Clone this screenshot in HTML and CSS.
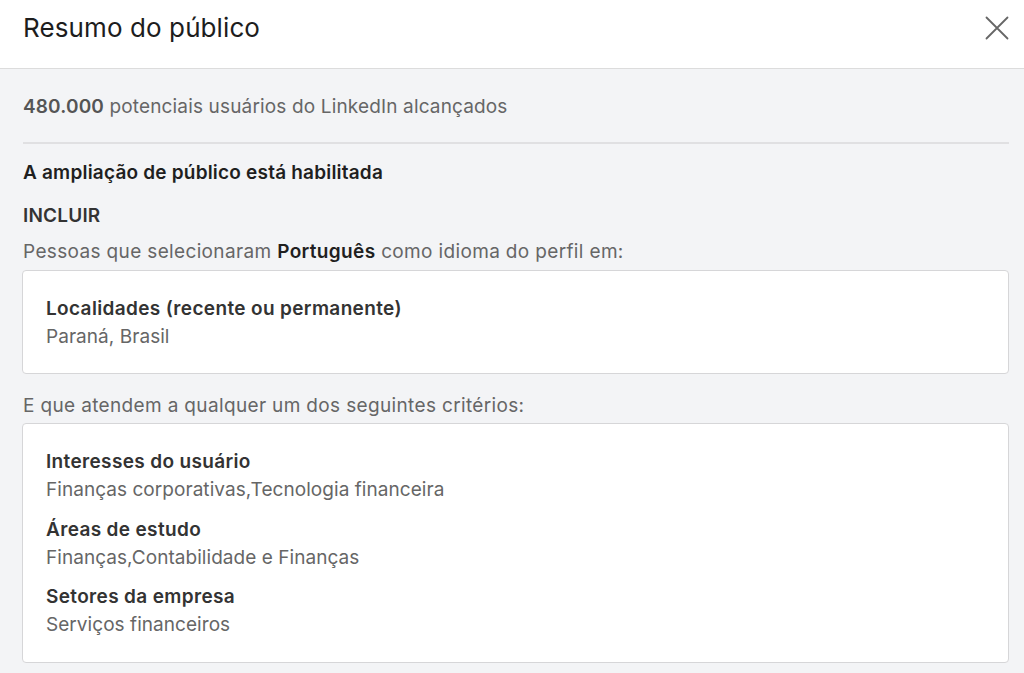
FILE: index.html
```html
<!DOCTYPE html>
<html lang="pt-BR">
<head>
<meta charset="utf-8">
<title>Resumo do público</title>
<link rel="stylesheet" href="styles.css">
</head>
<body>
<div class="modal">
  <header class="modal-header">
    <h1 class="modal-title">Resumo do público</h1>
    <button class="close-btn" aria-label="Fechar">
      <svg width="24" height="24" viewBox="0 0 24 24" fill="none" stroke="#666" stroke-width="1.8" stroke-linecap="round">
        <path d="M1.5 1.5 L22.5 22.5 M22.5 1.5 L1.5 22.5"/>
      </svg>
    </button>
  </header>
  <main class="modal-body">
    <p class="reach"><strong>480.000</strong> potenciais usuários do LinkedIn alcançados</p>
    <hr class="divider">
    <p class="expansion">A ampliação de público está habilitada</p>
    <p class="section-label">INCLUIR</p>
    <p class="desc">Pessoas que selecionaram <strong>Português</strong> como idioma do perfil em:</p>
    <div class="card card-single">
      <div class="criterion">
        <div class="crit-title">Localidades (recente ou permanente)</div>
        <div class="crit-value">Paraná, Brasil</div>
      </div>
    </div>
    <p class="desc desc-and">E que atendem a qualquer um dos seguintes critérios:</p>
    <div class="card card-multi">
      <div class="criterion">
        <div class="crit-title">Interesses do usuário</div>
        <div class="crit-value">Finanças corporativas,Tecnologia financeira</div>
      </div>
      <div class="criterion">
        <div class="crit-title">Áreas de estudo</div>
        <div class="crit-value">Finanças,Contabilidade e Finanças</div>
      </div>
      <div class="criterion">
        <div class="crit-title">Setores da empresa</div>
        <div class="crit-value">Serviços financeiros</div>
      </div>
    </div>
  </main>
</div>
</body>
</html>
```
FILE: styles.css
```css
* { box-sizing: border-box; }
html, body {
  margin: 0;
  padding: 0;
  height: 100%;
}
body {
  font-family: Inter, "Liberation Sans", Arial, sans-serif;
  background: #f3f4f6;
  color: #333;
  letter-spacing: 0.2px;
}
.modal {
  display: flex;
  flex-direction: column;
  min-height: 100%;
}
.modal-header {
  background: #fff;
  height: 69px;
  border-bottom: 1px solid #dcdcdc;
  display: flex;
  align-items: center;
  justify-content: space-between;
  padding: 0 14px 0 23px;
}
.modal-title {
  margin: 0;
  font-size: 26px;
  font-weight: 400;
  color: #1d1d1d;
  letter-spacing: 0.1px;
  padding-bottom: 13px;
}
.close-btn {
  background: none;
  border: 0;
  padding: 0;
  width: 24px;
  height: 24px;
  margin-bottom: 13px;
  margin-right: 1px;
  display: flex;
}
.modal-body {
  padding: 24px 15px 0 22px;
}
.reach {
  margin: 0 0 0 1px;
  font-size: 19px;
  line-height: 28px;
  color: #666;
  letter-spacing: 0.15px;
}
.reach strong { font-weight: 600; color: #555; }
.divider {
  border: 0;
  border-top: 2px solid #e0e0e2;
  margin: 21px 0 0 1px;
}
.expansion {
  margin: 15px 0 0 1px;
  font-size: 19px;
  font-weight: 600;
  line-height: 28px;
  color: #1f1f1f;
}
.section-label {
  margin: 15px 0 0 1px;
  font-size: 19px;
  font-weight: 600;
  line-height: 28px;
  color: #333;
}
.desc {
  margin: 8px 0 0 1px;
  font-size: 19px;
  line-height: 28px;
  color: #666;
  letter-spacing: 0.35px;
}
.desc strong { font-weight: 600; color: #1f1f1f; }
.desc-and { margin-top: 18px; }
.card {
  background: #fff;
  border: 1px solid #d6d6d8;
  border-radius: 4px;
  margin-top: 4px;
  padding: 24px 23px 22px;
  display: flex;
  flex-direction: column;
  gap: 11.5px;
}
.card-multi { margin-top: 3px; padding-bottom: 23px; }
.crit-title {
  font-size: 19px;
  font-weight: 600;
  line-height: 28px;
  color: #333;
  letter-spacing: 0.35px;
}
.crit-value {
  font-size: 19px;
  line-height: 28px;
  color: #666;
  letter-spacing: 0.05px;
}
```
